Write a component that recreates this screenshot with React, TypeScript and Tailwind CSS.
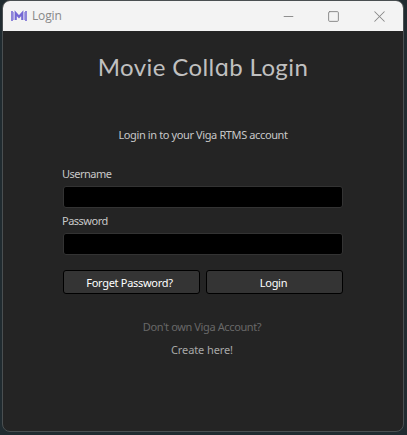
import { Minus, Square, X } from 'lucide-react';

function Logo() {
  return (
    <svg width="16" height="12" viewBox="0 0 16 12" fill="none" stroke="#7468d4">
      <path d="M1 1v10M15 1v10" strokeWidth="1.6" />
      <path d="M2.5 2v8M13.5 2v8" strokeWidth="1" stroke="#aaa3e6" />
      <path d="M4.7 10V3.2L8 6.8L11.3 3.2V10" strokeWidth="2.2" />
    </svg>
  );
}

function TitleBar() {
  return (
    <header className="flex h-[30px] shrink-0 items-center bg-[#f3f3f3] pl-2 text-[#888888]">
      <Logo />
      <span className="ml-[5px] grow font-['Open_Sans',sans-serif] text-[12px] leading-4 tracking-[-0.15px]">Login</span>
      <div className="flex items-center">
        <span className="flex w-[45px] justify-center"><Minus size={15} strokeWidth={1.5} /></span>
        <span className="flex w-[45px] justify-center"><Square size={13} strokeWidth={1.8} /></span>
        <span className="flex w-[47px] justify-center pr-px"><X size={19} strokeWidth={1.3} /></span>
      </div>
    </header>
  );
}

function Field({ label, type }: { label: string; type: string }) {
  return (
    <label className="block h-[47px] text-[#c8c8c8]">
      <span className="-ml-px block h-[19px] text-[11px] leading-[14px] tracking-[-0.5px]">{label}</span>
      <input type={type} className="block h-[22px] w-full rounded-[3px] border border-[#333333] bg-black px-2 outline-none" />
    </label>
  );
}

export default function App() {
  return (
    <div className="h-[435px] w-[407px] bg-[#202b30] pl-[2px] font-['Noto_Sans',sans-serif]">
      <div className="flex h-[432px] w-[402px] flex-col overflow-hidden rounded-lg border border-[#4a4f51] bg-[#242424]">
        <TitleBar />
        <main className="flex grow flex-col px-[60px]">
          <h1 className="mt-[19px] h-[35px] whitespace-nowrap text-center font-['Lato','Inter',sans-serif] text-[24px] leading-[34px] tracking-[0.4px] text-[#c0c0c0]">
            Movie Coll<span className="font-['Inter',sans-serif] text-[23px] font-normal [font-feature-settings:'cv11']">a</span>b Login
          </h1>
          <p className="mt-[42px] whitespace-nowrap text-center text-[11px] leading-[16px] tracking-[-0.38px] text-[#c8c8c8]">Login in to your Viga RTMS account</p>
          <form className="mt-[24px]">
            <Field label="Username" type="text" />
            <Field label="Password" type="password" />
            <div className="mt-[9px] grid grid-cols-2 gap-[6px] text-[11px] tracking-[-0.3px] text-white">
              <button type="button" className="h-6 rounded-[3px] border border-black bg-[#343434] pr-1 pt-[2px]">Forget Password?</button>
              <button type="button" className="h-6 rounded-[3px] border border-black bg-[#343434] pr-0.5 pt-[2px]">Login</button>
            </div>
          </form>
          <p className="mt-[26px] pr-0.5 text-center text-[11px] leading-[14px] tracking-[-0.38px] text-[#686868]">Don't own Viga Account?</p>
          <a className="mt-[9px] pr-0.5 text-center text-[11px] leading-[14px] tracking-[-0.1px] text-[#a8a8a8]">Create here!</a>
        </main>
      </div>
    </div>
  );
}
